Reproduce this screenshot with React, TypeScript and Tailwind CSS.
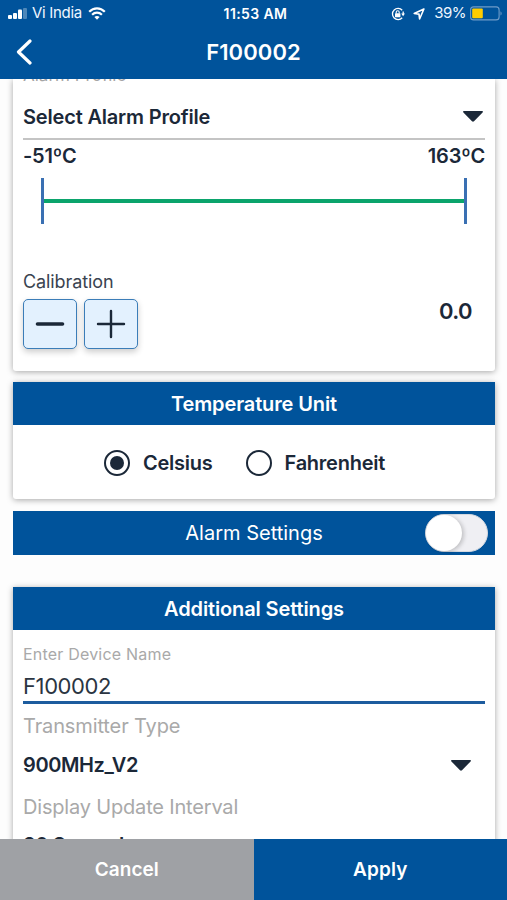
import React from 'react';

interface SectionHeaderProps {
  title: string;
}

const SectionHeader: React.FC<SectionHeaderProps> = ({ title }) => (
  <div className="h-[43px] pt-px bg-[#00539b] flex items-center justify-center text-white text-[20px] font-semibold tracking-[-0.12px]">
    {title}
  </div>
);

const Caret: React.FC = () => (
  <svg className="w-5 h-[11px]" viewBox="0 0 20 11" fill="#1b2838">
    <path d="M0.8 0H19.2C20 0 20.2 0.8 19.6 1.4L11 10.2C10.4 10.8 9.6 10.8 9 10.2L0.4 1.4C-0.2 0.8 0 0 0.8 0Z" />
  </svg>
);

interface RadioOptionProps {
  label: string;
  checked: boolean;
}

const RadioOption: React.FC<RadioOptionProps> = ({ label, checked }) => (
  <label className="flex items-center gap-[13px]">
    <span className="w-[26px] h-[26px] rounded-full border-[2.5px] border-[#1b2838] flex items-center justify-center">
      {checked && <span className="w-3.5 h-3.5 rounded-full bg-[#1b2838]" />}
    </span>
    <span className="text-[20px] font-semibold tracking-[-0.25px]">{label}</span>
  </label>
);

const StatusBar: React.FC = () => (
  <div className="h-[27px] grid grid-cols-[1fr_auto_1fr] items-center pl-2 pr-1 text-[14px]">
    <div className="flex items-center">
      <svg className="w-[19px] h-3" viewBox="0 0 19 12" fill="#fff">
        <rect x="0" y="7" width="4" height="4" rx="1" />
        <rect x="5" y="5" width="4" height="6" rx="1" />
        <rect x="10" y="1.5" width="4" height="9.5" rx="1" />
        <rect x="15" y="0" width="4" height="11" rx="1" opacity="0.3" />
      </svg>
      <span className="ml-[5px] text-[15px] tracking-[-0.3px] text-blue-50">Vi India</span>
      <svg className="ml-1.5 w-[18px] h-[13px]" viewBox="0 0 18 13" fill="none" stroke="#fff" strokeWidth="2.2">
        <path d="M1.2 4.8C5.6 0.2 12.4 0.2 16.8 4.8" />
        <path d="M4.1 7.8C6.9 5 11.1 5 13.9 7.8" />
        <path d="M6.4 10L9 12.8L11.6 10C10.1 8.8 7.9 8.8 6.4 10Z" fill="#fff" stroke="none" />
      </svg>
    </div>
    <span className="font-semibold tracking-[0.4px]">11:53 AM</span>
    <div className="flex items-center justify-end">
      <svg className="w-3.5 h-3.5" viewBox="0 0 14 14" fill="none" stroke="#fff" strokeWidth="1.3">
        <path d="M11.2 3.2A5.6 5.6 0 1 0 11.2 10.8" />
        <path d="M12.2 4.6V7.4" />
        <path d="M10.2 6.6H14L12.1 9.2Z" fill="#fff" stroke="none" />
        <rect x="4" y="6.2" width="5.4" height="4" rx="0.5" fill="#fff" stroke="none" />
        <path d="M5.2 6.6V5.2A1.5 1.5 0 0 1 8.2 5.2V6.6" strokeWidth="1.1" />
      </svg>
      <svg className="ml-2 w-3 h-3" viewBox="0 0 12 12" fill="none" stroke="#fff" strokeWidth="1.6" strokeLinejoin="round">
        <path d="M10.9 1L1.2 5.5L6 6.1L6.6 11Z" />
      </svg>
      <span className="ml-[9px] text-[15px] tracking-[-0.5px] text-blue-50">39%</span>
      <svg className="ml-1 w-[33px] h-[15px]" viewBox="0 0 33 15" fill="none">
        <rect x="0.6" y="0.9" width="28.5" height="13" rx="3" stroke="#6f9cc9" strokeWidth="1.1" />
        <rect x="2.2" y="2.5" width="10.6" height="9.8" rx="1" fill="#ffcc00" />
        <path d="M30.5 5.2C32 6 32 8.8 30.5 9.6Z" fill="#6f9cc9" />
      </svg>
    </div>
  </div>
);

const App: React.FC = () => {
  return (
    <div className="w-[507px] h-[900px] overflow-hidden flex flex-col bg-[#fdfdfd] text-[#1b2838] font-['Inter',sans-serif]">
      <header className="h-[79px] shrink-0 bg-[#00539b] text-white">
        <StatusBar />
        <div className="h-[50px] grid grid-cols-[40px_1fr_40px] items-center">
          <svg className="ml-4 w-4 h-[26px]" viewBox="0 0 16 26" fill="none" stroke="#fff" strokeWidth="3.2" strokeLinecap="round" strokeLinejoin="round">
            <path d="M14 2L2.5 13L14 24" />
          </svg>
          <h1 className="text-center text-[22px] font-semibold tracking-[0.1px]">F100002</h1>
        </div>
      </header>

      <main className="h-[760px] shrink-0 overflow-hidden pl-[13px] pr-3">
        {/* Sensor range and calibration */}
        <section className="h-[292px] px-2.5 bg-white rounded-b-[3px] shadow-[0_1px_6px_rgba(0,0,0,0.35)]">
          <div className="h-[9px] flex items-end text-[17px] text-[#a5a5a5]">Alarm Profile</div>
          <div className="h-[52px] pt-[7px] pr-0.5 flex items-center justify-between border-b-2 border-[#c4c4c4]">
            <span className="text-[20px] font-semibold tracking-[-0.18px]">Select Alarm Profile</span>
            <Caret />
          </div>
          <div className="h-8 flex items-center justify-between text-[20px] font-semibold tracking-[-0.2px]">
            <span>-51ºC</span>
            <span>163ºC</span>
          </div>
          <div className="mt-[6px] mx-[18px] h-[46px] flex items-center border-x-[3px] border-[#3a70b3]">
            <div className="w-full h-1 bg-[#0ba46c]" />
          </div>
          <div className="mt-[45px] h-6 flex items-center text-[18px] tracking-[-0.1px] text-[#3a4350]">Calibration</div>
          <div className="mt-1.5 flex justify-between">
            <div className="flex gap-[7px]">
              <button className="w-[54px] h-[50px] rounded-[5px] border-[1.5px] border-[#3b7db8] bg-[#e3f1fe] shadow-[0_3px_6px_rgba(0,0,0,0.2)] flex items-center justify-center">
                <svg className="w-[30px] h-[30px]" viewBox="0 0 30 30" fill="none" stroke="#1b2838" strokeWidth="3.6" strokeLinecap="round">
                  <path d="M2.5 15H27.5" />
                </svg>
              </button>
              <button className="w-[54px] h-[50px] rounded-[5px] border-[1.5px] border-[#3b7db8] bg-[#e3f1fe] shadow-[0_3px_6px_rgba(0,0,0,0.2)] flex items-center justify-center">
                <svg className="w-[30px] h-[30px]" viewBox="0 0 30 30" fill="none" stroke="#1b2838" strokeWidth="2.4" strokeLinecap="round">
                  <path d="M2 15H28M15 2V28" />
                </svg>
              </button>
            </div>
            <span className="h-6 mr-[13px] text-[22px] leading-6 font-semibold tracking-[-0.6px]">0.0</span>
          </div>
        </section>

        <section className="mt-[11px] h-[117px] bg-white rounded-[3px] shadow-[0_1px_6px_rgba(0,0,0,0.35)]">
          <SectionHeader title="Temperature Unit" />
          <div className="h-[74px] pt-0.5 pl-[91px] flex items-center gap-[33px]">
            <RadioOption label="Celsius" checked />
            <RadioOption label="Fahrenheit" checked={false} />
          </div>
        </section>

        <section className="mt-3 h-11 bg-[#00539b] grid grid-cols-[1fr_auto_1fr] items-center text-white">
          <span className="col-start-2 text-[20px]">Alarm Settings</span>
          <div className="justify-self-end mr-[7px] w-[63px] h-[38px] rounded-full bg-[#efeff3] border border-[#d5d9e0]">
            <div className="w-9 h-9 rounded-full bg-white shadow-[2px_1px_4px_rgba(0,0,0,0.2)]" />
          </div>
        </section>

        <section className="mt-8 h-[400px] bg-white shadow-[0_1px_6px_rgba(0,0,0,0.35)]">
          <SectionHeader title="Additional Settings" />
          <div className="px-2.5 pt-3">
            <div className="h-6 flex items-center text-[16px] text-[#a9a9a9] tracking-[0.2px]">Enter Device Name</div>
            <div className="h-[38px] pt-[5px] flex items-center border-b-[3px] border-[#1d5c9e] text-[22px] tracking-[-0.4px] text-[#2b3542]">F100002</div>
            <div className="h-11 flex items-center text-[20px] tracking-[-0.12px] text-[#a9a9a9]">Transmitter Type</div>
            <div className="mt-px h-8 pr-3.5 flex items-center justify-between">
              <span className="text-[20px] font-semibold tracking-[-0.4px]">900MHz_V2</span>
              <Caret />
            </div>
            <div className="h-[52px] flex items-center text-[20px] tracking-[-0.18px] text-[#a9a9a9]">Display Update Interval</div>
            <div className="h-6 flex items-center text-[20px] font-semibold tracking-[-0.4px]">30 Seconds</div>
          </div>
        </section>
      </main>

      <footer className="h-[61px] shrink-0 grid grid-cols-2 text-white text-[19px] font-semibold">
        <button className="pt-0.5 bg-[#9fa1a5]">Cancel</button>
        <button className="pt-0.5 bg-[#00539b] tracking-[0.1px]">Apply</button>
      </footer>
    </div>
  );
};

export default App;
